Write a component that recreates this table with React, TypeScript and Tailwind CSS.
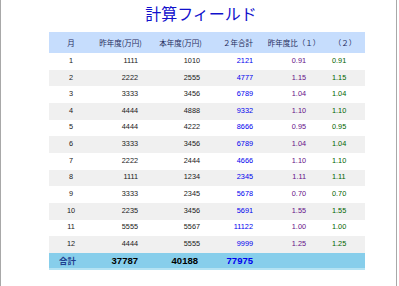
import React from 'react'

type Row = {
  month: number
  last: number
  current: number
  total: number
  ratio: string
}

const ROWS: Row[] = [
  { month: 1, last: 1111, current: 1010, total: 2121, ratio: '0.91' },
  { month: 2, last: 2222, current: 2555, total: 4777, ratio: '1.15' },
  { month: 3, last: 3333, current: 3456, total: 6789, ratio: '1.04' },
  { month: 4, last: 4444, current: 4888, total: 9332, ratio: '1.10' },
  { month: 5, last: 4444, current: 4222, total: 8666, ratio: '0.95' },
  { month: 6, last: 3333, current: 3456, total: 6789, ratio: '1.04' },
  { month: 7, last: 2222, current: 2444, total: 4666, ratio: '1.10' },
  { month: 8, last: 1111, current: 1234, total: 2345, ratio: '1.11' },
  { month: 9, last: 3333, current: 2345, total: 5678, ratio: '0.70' },
  { month: 10, last: 2235, current: 3456, total: 5691, ratio: '1.55' },
  { month: 11, last: 5555, current: 5567, total: 11122, ratio: '1.00' },
  { month: 12, last: 4444, current: 5555, total: 9999, ratio: '1.25' },
]

const COLS = 'grid grid-cols-[44px_55px_65px_50px_62px_40px]'
const JP = "font-['Noto_Sans_CJK_JP','Noto_Sans',sans-serif]"
const NUM = "font-['Liberation_Sans',Arial,sans-serif]"

export default function App() {
  return (
    <div className="h-[286px] w-[397px] border-x border-[#a8a8a8] bg-white">
      <div className={`h-[32px] pl-[5px] pt-[3px] text-center text-[16px] leading-[20px] text-[#1111cc] ${JP}`}>
        計算フィールド
      </div>

      <div className="ml-[48px] w-[316px]">
        {/* header */}
        <div className={`${COLS} h-[21px] items-center bg-[#c6ddfd] text-center text-[7.5px] text-[#1f2b5c] ${JP}`}>
          <div>月</div>
          <div>昨年度(万円)</div>
          <div>本年度(万円)</div>
          <div>２年合計</div>
          <div>昨年度比（１）</div>
          <div>（２）</div>
        </div>

        {ROWS.map((r, i) => (
          <div
            key={r.month}
            className={`${COLS} h-[16.67px] items-center text-[7.3px] text-[#1a1a1a] ${NUM} ${i % 2 === 1 ? 'bg-[#f0f0f0]' : 'bg-white'}`}
          >
            <div className="text-center">{r.month}</div>
            <div className="pr-[10px] text-right">{r.last}</div>
            <div className="pr-[13px] text-right">{r.current}</div>
            <div className="pr-[10px] text-right text-[#0000ee]">{r.total}</div>
            <div className="pr-[19px] text-right text-[#661188]">{r.ratio}</div>
            <div className="pl-[7px] text-[#006400]">{r.ratio}</div>
          </div>
        ))}

        {/* total */}
        <div className={`${COLS} h-[17.5px] items-center border-b-2 border-[#b5e3f3] bg-[#87ceeb] text-[9.5px] font-bold ${NUM}`}>
          <div className={`pl-[10px] text-[8.5px] text-[#1f3f8f] ${JP}`}>合計</div>
          <div className="pr-[10px] text-right text-black">37787</div>
          <div className="pr-[15px] text-right text-black">40188</div>
          <div className="pr-[10px] text-right text-[#0000ee]">77975</div>
          <div />
          <div />
        </div>
      </div>
    </div>
  )
}
